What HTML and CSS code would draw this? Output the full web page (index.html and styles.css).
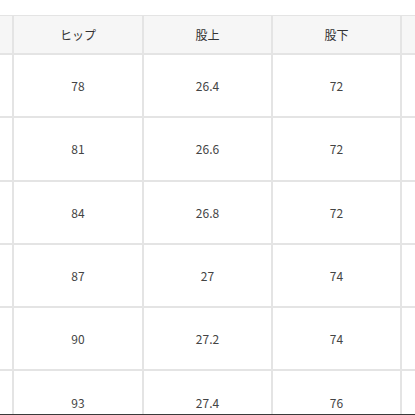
FILE: index.html
```html
<!DOCTYPE html>
<html lang="ja">
<head>
<meta charset="utf-8">
<link rel="stylesheet" href="styles.css">
</head>
<body>
<div class="frame">
  <div class="table">
    <div class="cell head"></div><div class="cell head">ヒップ</div><div class="cell head">股上</div><div class="cell head">股下</div><div class="cell head"></div>
    <div class="cell"></div><div class="cell">78</div><div class="cell">26.4</div><div class="cell">72</div><div class="cell"></div>
    <div class="cell"></div><div class="cell">81</div><div class="cell">26.6</div><div class="cell">72</div><div class="cell"></div>
    <div class="cell"></div><div class="cell">84</div><div class="cell">26.8</div><div class="cell">72</div><div class="cell"></div>
    <div class="cell"></div><div class="cell">87</div><div class="cell">27</div><div class="cell">74</div><div class="cell"></div>
    <div class="cell"></div><div class="cell">90</div><div class="cell">27.2</div><div class="cell">74</div><div class="cell"></div>
    <div class="cell"></div><div class="cell">93</div><div class="cell">27.4</div><div class="cell">76</div><div class="cell"></div>
  </div>
</div>
<div class="edge"></div>
</body>
</html>
```
FILE: styles.css
```css
html, body {
  margin: 0;
  padding: 0;
  background: #ffffff;
}
body {
  width: 415px;
  height: 415px;
  overflow: hidden;
  font-family: "Noto Sans CJK JP", "Noto Sans", sans-serif;
}
.frame {
  height: 414px;
  overflow: hidden;
  padding-top: 15px;
  box-sizing: border-box;
}
.table {
  display: grid;
  grid-template-columns: 12px 128px 127px 127px 1fr;
  grid-template-rows: 37px repeat(6, 61.3px);
  gap: 2px;
  background: #e4e4e4;
  padding-top: 1px;
}
.cell {
  background: #ffffff;
  display: flex;
  align-items: center;
  justify-content: center;
  font-size: 12px;
  color: #444444;
}
.head {
  background: #f6f6f6;
  color: #333333;
}
.edge {
  height: 1px;
  background: #3a3a3a;
}
```
